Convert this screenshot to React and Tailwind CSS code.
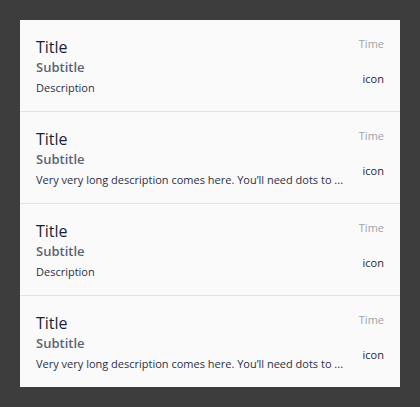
const longText = 'Very very long description comes here. You’ll need dots to ...'

const items = [
  { title: 'Title', subtitle: 'Subtitle', description: 'Description', time: 'Time' },
  { title: 'Title', subtitle: 'Subtitle', description: longText, time: 'Time' },
  { title: 'Title', subtitle: 'Subtitle', description: 'Description', time: 'Time' },
  { title: 'Title', subtitle: 'Subtitle', description: longText, time: 'Time' },
]

function ListItem({ item, last }) {
  return (
    <div
      className={`flex pl-4 pr-4 pt-[15px] ${
        last ? 'h-[91px]' : 'h-[92px] border-b border-[#e2e2e2]'
      }`}
    >
      <div className="flex min-w-0 flex-1 flex-col">
        <div className="mt-[1px] text-[16px] leading-[22px] text-[#1a1f38]">{item.title}</div>
        <div className="text-[13px] font-semibold leading-[19px] text-[#5c6275]">
          {item.subtitle}
        </div>
        <div className="mt-[3px] truncate text-[11px] leading-[16px] text-[#2b3044]">
          {item.description}
        </div>
      </div>
      <div className="ml-1 flex w-[34px] shrink-0 flex-col items-end">
        <div className="mt-[1px] text-[11px] leading-[16px] text-[#a2a3aa]">{item.time}</div>
        <div className="mt-[19px] text-[11px] leading-[16px] text-[#1e2336]">icon</div>
      </div>
    </div>
  )
}

export default function App() {
  return (
    <div
      className="h-[407px] w-[420px] bg-[#3d3d3d] p-5"
      style={{ fontFamily: '"Open Sans", sans-serif' }}
    >
      <div className="bg-[#fafafa]">
        {items.map((item, i) => (
          <ListItem key={i} item={item} last={i === items.length - 1} />
        ))}
      </div>
    </div>
  )
}
